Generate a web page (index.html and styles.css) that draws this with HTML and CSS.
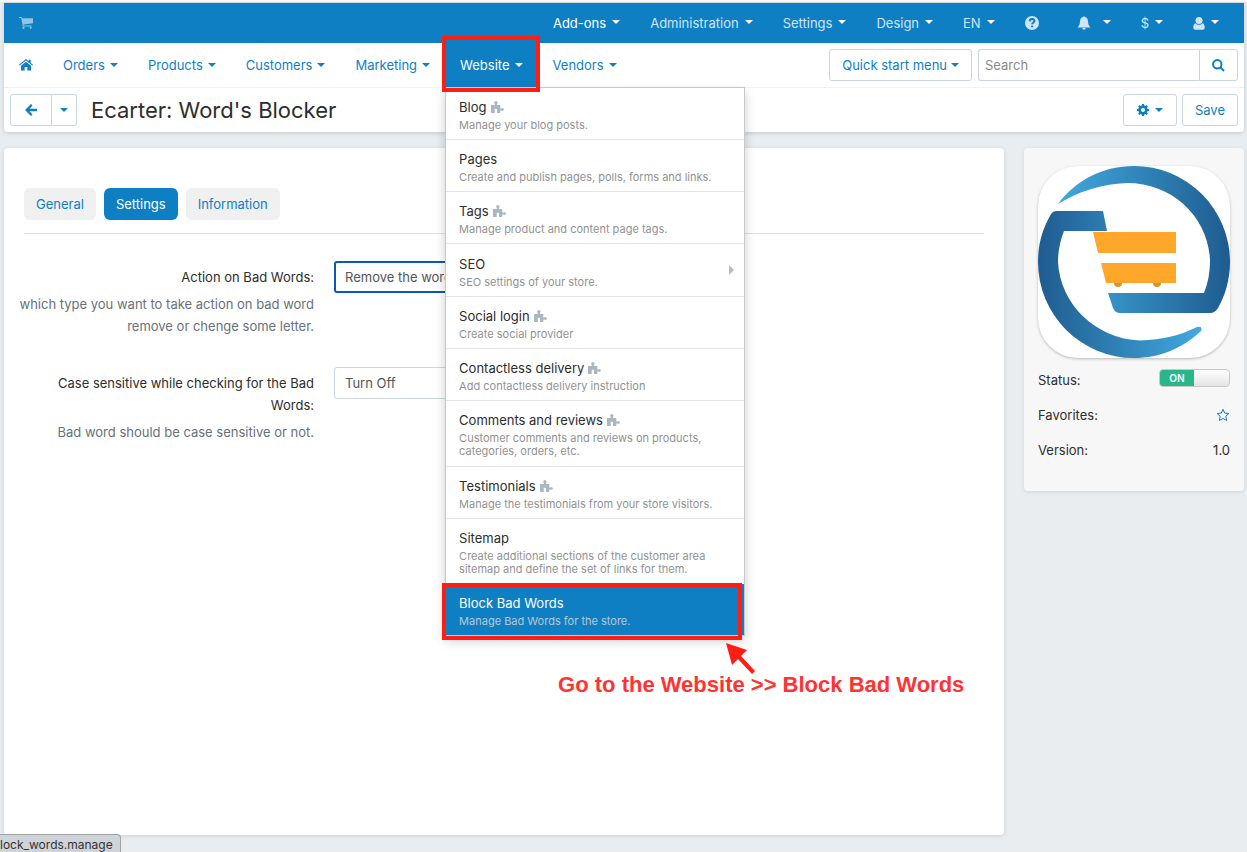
FILE: index.html
```html
<!DOCTYPE html>
<html lang="en">
<head>
<meta charset="utf-8">
<title>Ecarter: Word's Blocker</title>
<link rel="stylesheet" href="styles.css">
</head>
<body>
<svg class="defs" aria-hidden="true">
  <symbol id="puzzle" viewBox="0 0 13 13"><path d="M0 4H3.800V2.900A1.600 1.600 0 1 1 6 2.900V4H9.300V7.500H10.400A1.400 1.400 0 1 1 10.400 9.500H9.300V12H6V9.500A1.200 1.200 0 1 0 3.800 9.500V12H0Z"/></symbol>
</svg>

<div class="page">
  <header class="header">
    <div class="topbar">
      <a class="topbar-cart" href="#" aria-label="Storefront"><svg width="14" height="12" viewBox="0 0 14 12"><path d="M0 0h2.800l.4 1.300H14V6.300L4.500 7.500l.2 1H12.500v1H3.800L2.200 1H0Z"/><circle cx="4.500" cy="10.800" r="1.100"/><circle cx="11.700" cy="10.800" r="1.100"/></svg></a>
      <ul class="topmenu">
        <li><a class="active" href="#">Add-ons<span class="caret"></span></a></li>
        <li><a href="#">Administration<span class="caret"></span></a></li>
        <li><a href="#">Settings<span class="caret"></span></a></li>
        <li><a href="#">Design<span class="caret"></span></a></li>
        <li><a href="#">EN<span class="caret"></span></a></li>
        <li><a href="#" aria-label="Help"><svg width="14" height="14" viewBox="0 0 14 14"><circle cx="7" cy="7" r="7"/><path class="cut" d="M4.700 5.400C4.800 3.800 5.800 3.100 7.100 3.100S9.400 3.900 9.400 5.100C9.400 6.700 7.100 6.700 7.100 8.200M7.100 9.600V11.200"/></svg></a></li>
        <li class="bell"><a href="#" aria-label="Notifications"><svg width="14" height="14" viewBox="0 0 14 14"><path d="M6.200 1a.8.8 0 0 1 1.600 0C10.200 1.500 10.900 3.300 11 5.500 11.100 8.500 12 10 13.500 11.500H.5C2 10 2.900 8.500 3 5.500 3.100 3.300 3.800 1.500 6.200 1ZM5.200 12h3.600a1.800 1.800 0 0 1-3.600 0Z"/></svg><span class="caret"></span></a></li>
        <li><a href="#">$<span class="caret"></span></a></li>
        <li><a href="#" aria-label="Account"><svg width="12" height="13" viewBox="0 0 12 13"><circle cx="6" cy="3.600" r="3.500"/><path d="M2.500 6.200C3.400 7.200 4.600 7.700 6 7.700S8.600 7.200 9.500 6.200C11 6.600 11.700 8.300 11.700 10.700c0 1.300-.8 2-1.900 2H2.200c-1.100 0-1.900-.7-1.900-2C.3 8.300 1 6.600 2.500 6.200Z"/></svg><span class="caret"></span></a></li>
      </ul>
    </div>

    <nav class="navbar">
      <ul class="mainmenu">
        <li><a href="#" aria-label="Home"><svg width="14" height="12" viewBox="0 0 14 12"><path d="M7 0 9.700 2.200V.8h2v3.100L14 5.800l-.7.800L7 1.600.7 6.600 0 5.800ZM7 2.700l5 4V11.500H8.300V8H5.700v3.500H2V6.700Z"/></svg></a></li>
        <li><a href="#">Orders<span class="caret"></span></a></li>
        <li><a href="#">Products<span class="caret"></span></a></li>
        <li><a href="#">Customers<span class="caret"></span></a></li>
        <li><a href="#">Marketing<span class="caret"></span></a></li>
        <li class="open">
          <a href="#">Website<span class="caret"></span></a>
          <span class="marker marker-tab"></span>
          <ul class="dropdown">
            <li><a href="#"><span class="item-title">Blog <svg class="puzzle"><use href="#puzzle"/></svg></span><span class="item-desc">Manage your blog posts.</span></a></li>
            <li><a href="#"><span class="item-title">Pages</span><span class="item-desc">Create and publish pages, polls, forms and links.</span></a></li>
            <li><a href="#"><span class="item-title">Tags <svg class="puzzle"><use href="#puzzle"/></svg></span><span class="item-desc">Manage product and content page tags.</span></a></li>
            <li class="has-sub"><a href="#"><span class="item-title">SEO</span><span class="item-desc">SEO settings of your store.</span></a></li>
            <li><a href="#"><span class="item-title">Social login <svg class="puzzle"><use href="#puzzle"/></svg></span><span class="item-desc">Create social provider</span></a></li>
            <li><a href="#"><span class="item-title">Contactless delivery <svg class="puzzle"><use href="#puzzle"/></svg></span><span class="item-desc">Add contactless delivery instruction</span></a></li>
            <li class="long"><a href="#"><span class="item-title">Comments and reviews <svg class="puzzle"><use href="#puzzle"/></svg></span><span class="item-desc">Customer comments and reviews on products, categories, orders, etc.</span></a></li>
            <li><a href="#"><span class="item-title">Testimonials <svg class="puzzle"><use href="#puzzle"/></svg></span><span class="item-desc">Manage the testimonials from your store visitors.</span></a></li>
            <li class="long"><a href="#"><span class="item-title">Sitemap</span><span class="item-desc">Create additional sections of the customer area sitemap and define the set of links for them.</span></a></li>
            <li class="selected"><a href="#"><span class="item-title">Block Bad Words</span><span class="item-desc">Manage Bad Words for the store.</span></a>
              <span class="marker marker-item"></span>
              <svg class="arrow" width="30" height="32" viewBox="0 0 30 32"><path d="M0 0 21 7 15 13 29 28 26 31 12 16 6 22Z"/></svg>
              <strong class="note">Go to the Website &gt;&gt; Block Bad Words</strong>
            </li>
          </ul>
        </li>
        <li><a href="#">Vendors<span class="caret"></span></a></li>
      </ul>
      <button class="btn" type="button">Quick start menu<span class="caret"></span></button>
      <form class="search">
        <input type="text" placeholder="Search" aria-label="Search">
        <button class="btn" type="button" aria-label="Find"><svg width="13" height="13" viewBox="0 0 13 13"><circle class="line" cx="5.300" cy="5.300" r="4.200"/><path class="line" d="M8.500 8.500 12 12"/></svg></button>
      </form>
    </nav>

    <div class="titlebar">
      <div class="btn-group">
        <button class="btn btn-back" type="button" aria-label="Back"><svg width="12" height="12" viewBox="0 0 12 12"><path d="M6 0 7.500 1.500 4.500 4.700H12V7.300H4.500L7.500 10.500 6 12 0 6Z"/></svg></button>
        <button class="btn btn-more" type="button" aria-label="History"><span class="caret"></span></button>
      </div>
      <h1>Ecarter: Word's Blocker</h1>
      <button class="btn btn-gear" type="button" aria-label="Tools"><svg width="12" height="12" viewBox="0 0 12 12"><path fill-rule="evenodd" d="M5 0H7L7.300 1.600 8.300 2 9.600 1.100 10.900 2.400 10 3.700 10.400 4.700 12 5V7L10.400 7.300 10 8.300 10.900 9.600 9.600 10.900 8.300 10 7.300 10.400 7 12H5L4.700 10.400 3.700 10 2.400 10.900 1.100 9.600 2 8.300 1.600 7.300 0 7V5L1.600 4.700 2 3.700 1.100 2.400 2.400 1.100 3.700 2 4.700 1.600ZM6 4A2 2 0 1 0 6 8 2 2 0 1 0 6 4Z"/></svg><span class="caret"></span></button>
      <button class="btn" type="button">Save</button>
    </div>
  </header>

  <div class="content">
    <main class="card">
      <ul class="tabs">
        <li><a href="#">General</a></li>
        <li><a class="active" href="#">Settings</a></li>
        <li><a href="#">Information</a></li>
      </ul>
      <form class="form">
        <div class="field">
          <div class="field-text">
            <label for="bad-action">Action on Bad Words:</label>
            <p>which type you want to take action on bad word remove or chenge some letter.</p>
          </div>
          <select class="focused" id="bad-action"><option>Remove the word</option></select>
        </div>
        <div class="field">
          <div class="field-text">
            <label for="bad-case">Case sensitive while checking for the Bad Words:</label>
            <p>Bad word should be case sensitive or not.</p>
          </div>
          <select id="bad-case"><option>Turn Off</option></select>
        </div>
      </form>
    </main>

    <aside class="sidebar">
      <svg class="logo" viewBox="0 0 192 192" role="img" aria-label="Ecarter">
        <defs>
          <linearGradient id="g1" gradientUnits="userSpaceOnUse" x1="20" y1="0" x2="192" y2="0"><stop offset="0" stop-color="#41a9de"/><stop offset="1" stop-color="#1f5c90"/></linearGradient>
          <linearGradient id="g2" gradientUnits="userSpaceOnUse" x1="0" y1="0" x2="163" y2="0"><stop offset="0" stop-color="#1f5c90"/><stop offset="1" stop-color="#41a9de"/></linearGradient>
        </defs>
        <path fill="url(#g1)" d="M20 38C38 14 65 0 96 0A96 96 0 0 1 192 96C192 114 187 130 180 142Q177 147 172 147H82Q77 147 75 142L70 127H166Q172 112 172 95C171 52 135 17 89 17C62 18 40 26 20 38Z"/>
        <path fill="url(#g2)" d="M18 45H65L69 65H26Q20 80 20 96C22 138 58 173 102 174.500C125 174 143 169 159 161Q165 160 163 165C145 182 122 192 96 192A96 96 0 0 1 0 96C0 77 5 62 13 48Q15 45 18 45Z"/>
        <path fill="#ffa62b" d="M55 66H138V87H60ZM63 97H138V117H68Z"/>
        <path fill="#d9952f" d="M76 117h8a4 4 0 0 1-8 0ZM115 117h8a4 4 0 0 1-8 0Z"/>
      </svg>
      <div class="info">
        <label for="status">Status:</label>
        <span class="switch"><input type="checkbox" id="status" checked><span class="switch-on">ON</span></span>
      </div>
      <div class="info">
        <span>Favorites:</span>
        <button class="star" type="button" aria-label="Add to favorites"><svg width="14" height="14" viewBox="0 0 14 14"><path d="M7 1.300 8.700 5 12.900 5.500 9.800 8.300 10.600 12.500 7 10.500 3.400 12.500 4.200 8.300 1.100 5.500 5.300 5Z"/></svg></button>
      </div>
      <div class="info">
        <span>Version:</span>
        <span>1.0</span>
      </div>
    </aside>
  </div>
  <div class="statusbar">lock_words.manage</div>
</div>
</body>
</html>
```

FILE: styles.css
```css
* { box-sizing: border-box; }

body {
  margin: 0;
  background: #e9edf0;
  color: #2d2d2d;
  font: 13px/20px Inter, "Liberation Sans", sans-serif;
}

ul, p, h1 { margin: 0; padding: 0; list-style: none; }
a { color: inherit; text-decoration: none; }
svg { fill: currentColor; flex: none; }
button, input, select { font: inherit; margin: 0; }
.defs { position: absolute; width: 0; height: 0; }

.page {
  display: flex;
  flex-direction: column;
  min-height: 100vh;
  padding: 0 3px 17px 4px;
  border-top: 2px solid #fff;
}

.caret {
  width: 8px;
  border: 4px solid transparent;
  border-top-color: currentColor;
  border-bottom: 0;
}

/* Header */
.header {
  border-top: 1px solid #d3d9dd;
  border-radius: 0 0 4px 4px;
  background: #fff;
  box-shadow: 0 1px 4px rgba(0, 0, 0, .16);
}

.topbar {
  display: flex;
  align-items: center;
  justify-content: space-between;
  height: 40px;
  padding: 0 25px 0 15px;
  background: #0f7fc4;
  color: #cfe5f3;
}
.topbar-cart { display: flex; color: #8fc4e4; }
.topmenu { display: flex; gap: 30px; }
.topmenu a { display: flex; align-items: center; gap: 6px; height: 20px; }
.topmenu .active { color: #fff; }
.topmenu .caret { color: #fff; margin-bottom: 3px; }
.topmenu .bell { margin-left: 8px; }
.bell a { gap: 12px; }
.cut { fill: none; stroke: #0f7fc4; stroke-width: 2; }

.navbar {
  display: flex;
  align-items: center;
  gap: 6px;
  padding-right: 6px;
  border-bottom: 1px solid #f1f2f3;
  color: #0f7fc4;
}
.mainmenu { display: flex; flex: 1; }
.mainmenu > li { position: relative; }
.mainmenu > li > a {
  display: flex;
  align-items: center;
  gap: 5px;
  height: 44px;
  padding: 0 15px;
}
.mainmenu > .open > a { background: #0f7fc4; color: #fff; }

.btn {
  display: flex;
  align-items: center;
  justify-content: center;
  gap: 4px;
  height: 32px;
  padding: 0 12px;
  border: 1px solid #cbd5dd;
  border-radius: 3px;
  background: #fff;
  color: #0f7fc4;
}
.search { display: flex; }
.search input {
  width: 221px;
  height: 32px;
  padding: 0 6px;
  border: 1px solid #cbd5dd;
  border-right: 0;
  border-radius: 3px 0 0 3px;
}
.search input::placeholder { color: #8b8b8b; opacity: 1; }
.search .btn { width: 39px; border-radius: 0 3px 3px 0; }
.line { fill: none; stroke: currentColor; stroke-width: 2; }

.titlebar {
  display: flex;
  align-items: center;
  gap: 5px;
  padding: 6px;
}
.titlebar h1 {
  flex: 1;
  padding-left: 9px;
  font-size: 22px;
  line-height: 32px;
  font-weight: 400;
}
.btn-group { display: flex; }
.btn-back { width: 42px; border-radius: 3px 0 0 3px; }
.btn-more { width: 25px; padding: 0; border-left: 0; border-radius: 0 3px 3px 0; }
.btn-gear { width: 54px; gap: 6px; }

/* Website menu */
.dropdown {
  position: absolute;
  top: 44px;
  left: 0;
  z-index: 10;
  width: 300px;
  border: 1px solid #c8c8c8;
  background: #fff;
  color: #2d2d2d;
  box-shadow: 0 5px 10px rgba(0, 0, 0, .2);
}
.dropdown li { position: relative; border-bottom: 1px solid #e5e5e5; }
.dropdown a { display: block; padding: 9px 14px 7px 13px; }
.dropdown .has-sub a { padding-top: 10px; }
.dropdown .long a { padding-bottom: 8px; }
.dropdown li:nth-last-child(-n+2) { border-bottom: 0; }
.item-title { display: flex; align-items: center; gap: 4px; }
.item-desc {
  display: block;
  margin-top: 2px;
  color: #929292;
  font-size: 11px;
  line-height: 13px;
}
.puzzle { width: 13px; height: 13px; color: #aab7c0; }
.has-sub::after {
  content: "";
  position: absolute;
  top: 21px;
  right: 10px;
  border: 5px solid transparent;
  border-left-color: #bbb;
  border-right: 0;
}
.dropdown .selected { background: #0f7fc4; color: #fff; }
.selected .item-desc { color: #b9c7d0; }

/* Annotations */
.marker { position: absolute; border: 4px solid #ff1d14; }
.marker-tab { z-index: 20; inset: -7px -2px -5px -3px; }
.marker-item { inset: -1px 2px -5px -4px; }
.arrow { position: absolute; top: 59px; left: 280px; color: #ff1d14; }
.note {
  position: absolute;
  top: 88px;
  left: 112px;
  color: #ff3432;
  font: bold 22px/26px "Liberation Sans", Arial, sans-serif;
  white-space: nowrap;
}

/* Content */
.content { display: flex; flex: 1; gap: 20px; padding-top: 16px; }
.card {
  flex: 1;
  padding: 40px 20px;
  border-radius: 4px;
  background: #fff;
  box-shadow: 0 1px 4px rgba(0, 0, 0, .12);
}
.tabs {
  display: flex;
  gap: 8px;
  padding-bottom: 13px;
  border-bottom: 1px solid #dbe2e7;
}
.tabs a {
  display: block;
  padding: 6px 12px;
  border-radius: 6px;
  background: #f0f0f0;
  color: #0f7fc4;
}
.tabs .active { background: #0f7fc4; color: #fff; }

.form { display: grid; gap: 30px; padding-top: 27px; }
.field { display: flex; align-items: flex-start; gap: 20px; line-height: 22px; }
.field-text { width: 290px; padding-top: 5px; text-align: right; }
.field-text label { display: block; padding-left: 20px; }
.field-text p { margin: 5px 0 0 -10px; color: #67727a; }
.field select {
  width: 220px;
  height: 32px;
  padding: 0 6px;
  border: 1px solid #cbd5dd;
  border-radius: 3px;
  background: #fff;
  color: #555;
}
.field .focused { padding: 0 5px; border: 2px solid #0a58ba; }

.sidebar {
  align-self: flex-start;
  display: grid;
  width: 220px;
  padding: 18px 14px 24px;
  border-radius: 4px;
  background: #f7f7f7;
  box-shadow: 0 1px 4px rgba(0, 0, 0, .1);
}
.logo {
  width: 192px;
  border-radius: 40px;
  background: #fff;
  box-shadow: 0 1px 3px rgba(0, 0, 0, .25);
  margin-bottom: 4px;
}
.info { display: flex; align-items: center; justify-content: space-between; height: 35px; }
.switch { position: relative; display: flex; margin-bottom: 4px; }
.switch input {
  width: 71px;
  height: 18px;
  appearance: none;
  border: 1px solid #c8c8c8;
  border-radius: 4px;
  background: linear-gradient(#fff, #e4e4e4);
}
.switch-on {
  position: absolute;
  inset: 1px 36px 1px 1px;
  border-radius: 3px 0 0 3px;
  background: #2bb58a;
  color: #fff;
  font-size: 10px;
  line-height: 16px;
  font-weight: 600;
  text-align: center;
}
.star { display: flex; padding: 0; border: 0; background: none; color: #0f7fc4; }
.star path { fill: none; stroke: currentColor; }

/* Browser link preview */
.statusbar {
  position: fixed;
  bottom: 0;
  left: 0;
  height: 18px;
  padding-right: 7px;
  border: 1px solid #9fa3a6;
  border-width: 1px 1px 0 0;
  border-radius: 0 4px 0 0;
  background: #d0d4d8;
  color: #333;
  font-size: 12px;
  line-height: 19px;
}
```
